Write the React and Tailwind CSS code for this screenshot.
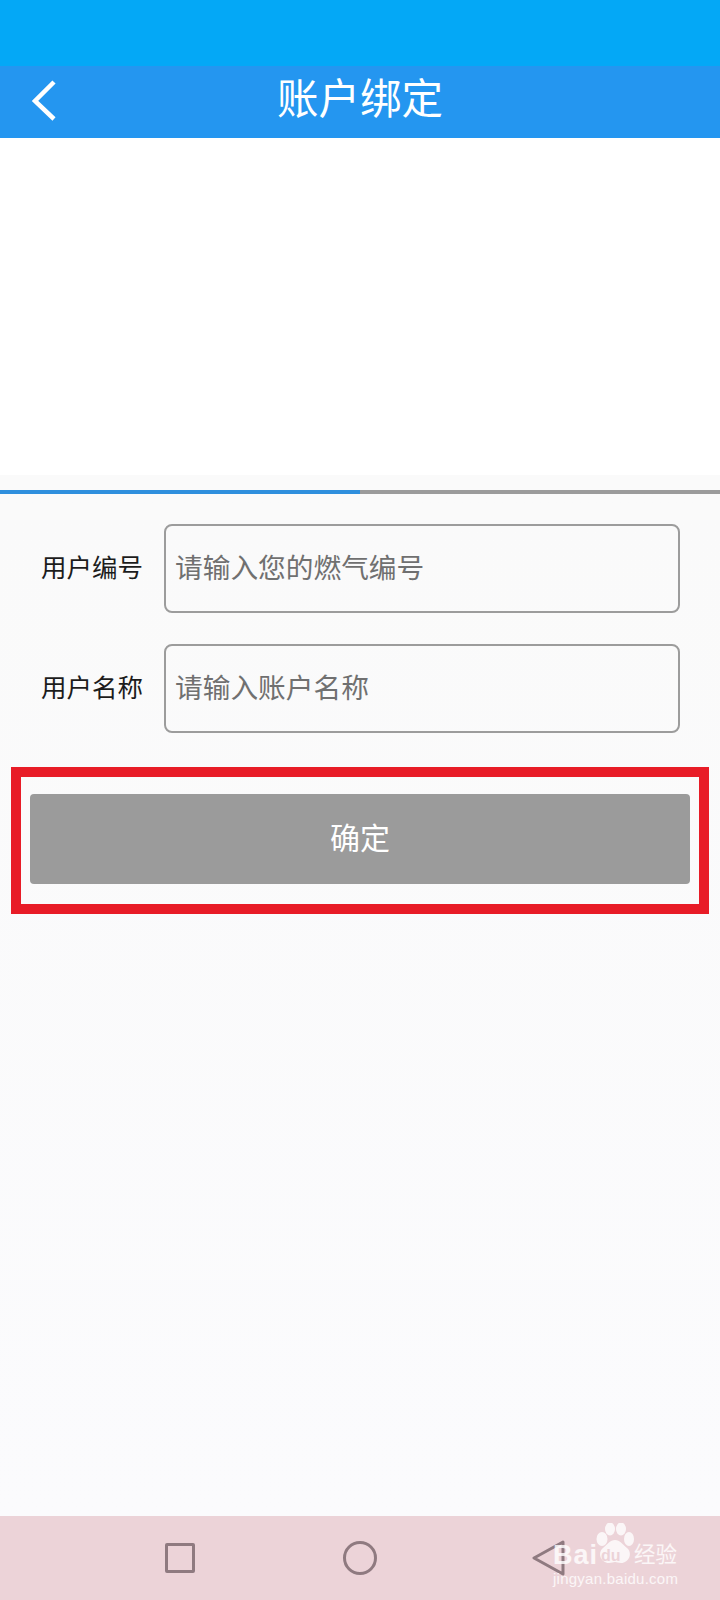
const cjk = "font-['Roboto','Noto_Sans_CJK_SC',sans-serif]"

function Field({ label, placeholder }) {
  return (
    <div className="flex items-center h-[89px]">
      <label className="w-[164px] shrink-0 pl-[41px] text-[25.5px] leading-none text-[#1c1c1c] whitespace-nowrap">{label}</label>
      <div className="w-[516px] shrink-0 h-full flex items-center pl-[9px] rounded-[8px] border-2 border-[#9c9c9c] text-[27.7px] text-[#707070] whitespace-nowrap">
        {placeholder}
      </div>
    </div>
  )
}

function NavBar() {
  return (
    <div className="relative h-[84px] bg-[#ecd3d8] shrink-0">
      <div className="flex h-full items-center pl-[165px]">
        <span className="w-[30px] h-[30px] rounded-[2px] border-[3px] border-[#8f7a80]" />
        <span className="ml-[148px] w-[34px] h-[34px] rounded-full border-[3px] border-[#8f7a80]" />
        <svg className="ml-[155px]" width="34" height="36" viewBox="0 0 34 36" fill="none" stroke="#8f7a80" strokeWidth="3" strokeLinejoin="round">
          <path d="M31 2 2 18l29 16Z" />
        </svg>
      </div>
      <div className="absolute left-[553px] top-[7px] w-[130px] h-[70px] text-white/80">
        <svg className="absolute left-[43px] top-0" width="38" height="41" viewBox="0 0 38 41" fill="currentColor">
          <ellipse cx="6" cy="16" rx="5.5" ry="7" />
          <ellipse cx="14" cy="6" rx="5" ry="6.5" />
          <ellipse cx="25" cy="6" rx="5" ry="6.5" />
          <ellipse cx="33" cy="16" rx="5" ry="7" />
          <path d="M19 17c5 0 7 4 12 8 6 5 2 15-6 15-3 0-4-1-6-1s-3 1-6 1c-8 0-12-10-6-15 5-4 7-8 12-8Z" />
        </svg>
        <span className="absolute left-0 top-[16px] font-['Liberation_Sans'] font-bold text-[27px] leading-[32px] tracking-[1px]">Bai</span>
        <span className="absolute left-[48px] top-[23px] font-['Liberation_Sans'] font-bold text-[16px] leading-[20px] text-[#ecd3d8]">du</span>
        <span className="absolute left-[81px] top-[19px] text-[21.5px] leading-[26px] whitespace-nowrap">经验</span>
        <span className="absolute left-0 top-[46px] font-['Liberation_Sans'] text-[15px] leading-[20px] tracking-[0.25px] whitespace-nowrap">jingyan.baidu.com</span>
      </div>
    </div>
  )
}

export default function App() {
  return (
    <div className={`${cjk} w-[720px] h-[1600px] flex flex-col bg-[#fbfbfd]`}>
      <div className="h-[66px] bg-[#04a8f6] shrink-0" />
      <header className="relative h-[72px] bg-[#2496f0] shrink-0 flex items-center justify-center">
        <svg className="absolute left-[30px] top-[13px]" width="28" height="42" viewBox="0 0 28 42" fill="none" stroke="#fff" strokeWidth="4.5">
          <path d="M24 3 5 22l19 18" />
        </svg>
        <h1 className="text-[41.5px] leading-none text-white font-normal pb-[5px]">账户绑定</h1>
      </header>
      <div className="h-[337px] bg-white shrink-0" />
      <div className="h-[15px] bg-[#fafafa] shrink-0" />
      <div className="h-1 flex shrink-0">
        <div className="w-1/2 bg-[#2f8fdd]" />
        <div className="w-1/2 bg-[#9b9b9b]" />
      </div>
      <main className="flex-1 bg-gradient-to-b from-[#fafafa] to-[#fbfbfd]">
        <div className="pt-[30px] flex flex-col gap-[31px]">
          <Field label="用户编号" placeholder="请输入您的燃气编号" />
          <Field label="用户名称" placeholder="请输入账户名称" />
        </div>
        <div className="ml-[11px] mt-[34px] w-[698px] h-[147px] border-[10px] border-[#e81c27] pl-[9px] pt-[17px]">
          <button className="w-[660px] h-[90px] rounded-[4px] bg-[#9b9b9b] text-white text-[30px] leading-none">确定</button>
        </div>
      </main>
      <NavBar />
    </div>
  )
}
